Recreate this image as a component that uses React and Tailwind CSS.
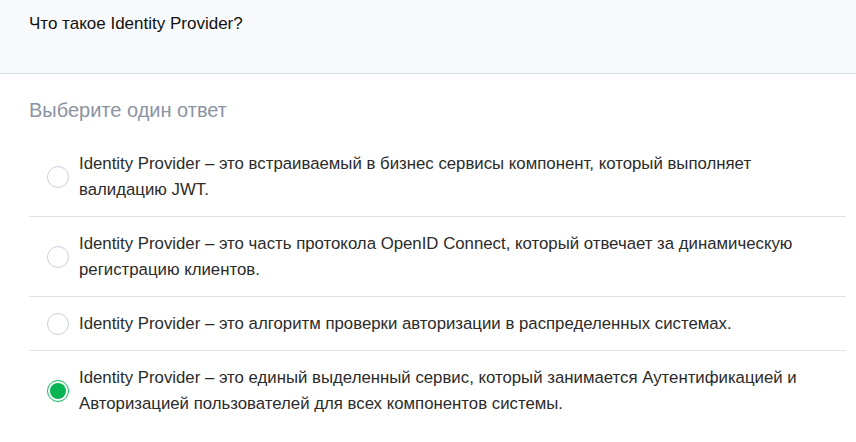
import React, { useState } from "react";

const options = [
  "Identity Provider – это встраиваемый в бизнес сервисы компонент, который выполняет валидацию JWT.",
  "Identity Provider – это часть протокола OpenID Connect, который отвечает за динамическую регистрацию клиентов.",
  "Identity Provider – это алгоритм проверки авторизации в распределенных системах.",
  "Identity Provider – это единый выделенный сервис, который занимается Аутентификацией и Авторизацией пользователей для всех компонентов системы.",
];

function Radio({ checked }) {
  return (
    <span
      className={
        "flex h-[22px] w-[22px] shrink-0 items-center justify-center rounded-full border bg-white " +
        (checked ? "border-[#0cb85a]" : "border-[#c9d1dc]")
      }
    >
      {checked && <span className="h-[16px] w-[16px] rounded-full bg-[#08b552]" />}
    </span>
  );
}

export default function App() {
  const [selected, setSelected] = useState(3);

  return (
    <div className="min-h-screen bg-white font-['Liberation_Sans',Arial,sans-serif] text-[#222]">
      <div className="h-[74px] border-b border-[#d5dde8] bg-[#f8f9fb] px-[29px] pt-[14px]">
        <p className="text-[17px] leading-[20px] text-[#111]">Что такое Identity Provider?</p>
      </div>

      <div className="pl-[29px] pr-[10px]">
        <h2 className="pt-[24px] pb-[15px] text-[20px] leading-[24px] text-[#8a94a1]">
          Выберите один ответ
        </h2>

        <div>
          {options.map((text, i) => (
            <label
              key={i}
              onClick={() => setSelected(i)}
              className={
                "flex cursor-pointer items-center gap-[10px] pt-[14px] pb-[13px] pl-[18px] pr-[24px] " +
                (i < options.length - 1 ? "border-b border-[#e2e2e2]" : "")
              }
            >
              <Radio checked={selected === i} />
              <span className="text-[16.8px] leading-[26px] text-[#2b2b2b]">{text}</span>
            </label>
          ))}
        </div>
      </div>
    </div>
  );
}
